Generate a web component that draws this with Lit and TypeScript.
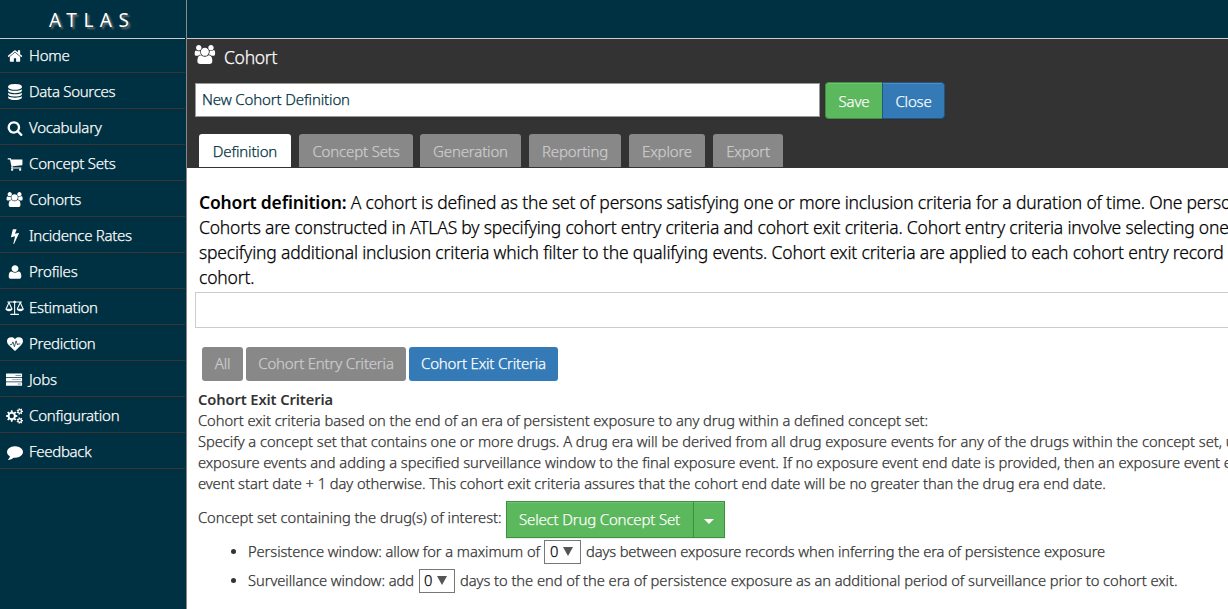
import { LitElement, html, css, svg } from "lit";

const gear = (cx: number, cy: number, r: number, inner: number, hole: number, teeth: number) => {
  const pts: string[] = [];
  const step = (Math.PI * 2) / teeth;
  for (let i = 0; i < teeth; i++) {
    const a = i * step;
    for (const [k, rad] of [[-0.3, inner], [-0.19, r], [0.19, r], [0.3, inner]]) {
      pts.push(`${(cx + Math.cos(a + k * step) * rad).toFixed(1)} ${(cy + Math.sin(a + k * step) * rad).toFixed(1)}`);
    }
  }
  return `M${pts.join("L")}ZM${cx - hole} ${cy}a${hole} ${hole} 0 1 0 ${hole * 2} 0a${hole} ${hole} 0 1 0 ${-hole * 2} 0Z`;
};

const USERS = svg`<path d="M657 896q-162 5-265 128h-134q-82 0-138-40.5t-56-118.5q0-353 124-353 6 0 43.5 21t97.5 42.5 119 21.5q67 0 133-23-5 37-5 66 0 159 93 293zm1071 637q0 120-73 189.5t-194 69.5h-874q-121 0-194-69.5t-73-189.5q0-53 3.500-103.500t14-109 26.500-108.500 43-97.500 62-81 85.500-53.500 111.500-20q10 0 43 21.500t73 48 107 48 135 21.500 135-21.500 107-48 73-48 43-21.500q61 0 111.500 20t85.500 53.500 62 81 43 97.500 26.500 108.500 14 109 3.500 103.500zm-1024-1277q0 106-75 181t-181 75-181-75-75-181 75-181 181-75 181 75 75 181zm704 384q0 159-112.500 271.500t-271.500 112.500-271.500-112.500-112.500-271.500 112.500-271.500 271.500-112.500 271.500 112.500 112.500 271.500zm576 225q0 78-56 118.500t-138 40.500h-134q-103-123-265-128 93-134 93-293 0-29-5-66 66 23 133 23 59 0 119-21.500t97.500-42.500 43.500-21q124 0 124 353zm-128-609q0 106-75 181t-181 75-181-75-75-181 75-181 181-75 181 75 75 181z"/>`;

const ICONS: Record<string, { w: number; body: unknown }> = {
  home: { w: 1792, body: svg`<path d="M1472 992v480q0 26-19 45t-45 19h-384v-384h-256v384h-384q-26 0-45-19t-19-45v-480q0-1 .5-3t.5-3l575-474 575 474q1 2 1 6zm223-69l-62 74q-8 9-21 11h-3q-13 0-21-7l-692-577-692 577q-12 8-24 7-13-2-21-11l-62-74q-8-10-7-23.500t11-21.500l719-599q32-26 76-26t76 26l244 204v-195q0-14 9-23t23-9h192q14 0 23 9t9 23v408l219 182q10 8 11 21.500t-7 23.500z"/>` },
  database: { w: 1792, body: svg`<path d="M896 768q237 0 443-43t325-127v170q0 69-103 128t-280 93.500-385 34.500-385-34.500-280-93.500-103-128v-170q119 84 325 127t443 43zm0 768q237 0 443-43t325-127v170q0 69-103 128t-280 93.500-385 34.500-385-34.500-280-93.500-103-128v-170q119 84 325 127t443 43zm0-384q237 0 443-43t325-127v170q0 69-103 128t-280 93.500-385 34.500-385-34.500-280-93.500-103-128v-170q119 84 325 127t443 43zm0-1152q208 0 385 34.500t280 93.500 103 128v128q0 69-103 128t-280 93.500-385 34.500-385-34.500-280-93.500-103-128v-128q0-69 103-128t280-93.500 385-34.500z"/>` },
  search: { w: 1792, body: svg`<path d="M1216 832q0-185-131.500-316.500t-316.500-131.500-316.500 131.500-131.500 316.500 131.500 316.500 316.500 131.500 316.500-131.500 131.500-316.500zm512 832q0 52-38 90t-90 38q-54 0-90-38l-343-342q-179 124-399 124-143 0-273.500-55.500t-225-150-150-225-55.500-273.500 55.500-273.500 150-225 225-150 273.500-55.500 273.500 55.500 225 150 150 225 55.500 273.500q0 220-124 399l343 343q37 37 37 90z"/>` },
  cart: { w: 1792, body: svg`<path d="M704 1536q0 52-38 90t-90 38-90-38-38-90 38-90 90-38 90 38 38 90zm896 0q0 52-38 90t-90 38-90-38-38-90 38-90 90-38 90 38 38 90zm128-1088v512q0 24-16.500 42.500t-40.500 21.500l-1044 122q13 60 13 70 0 16-24 64h920q26 0 45 19t19 45-19 45-45 19h-1024q-26 0-45-19t-19-45q0-11 8-31.500t16-36 21.500-40 15.500-29.500l-177-823h-204q-26 0-45-19t-19-45 19-45 45-19h256q16 0 28.500 6.500t19.500 15.500 13 24.500 8 26 5.500 29.500 4.500 26h1201q26 0 45 19t19 45z"/>` },
  users: { w: 2048, body: USERS },
  bolt: { w: 1792, body: svg`<path d="M1333 566q18 20 7 44l-540 1157q-13 25-42 25-4 0-14-2-17-5-25.500-19t-4.500-30l197-808-406 101q-4 1-12 1-18 0-31-11-18-15-13-39l201-825q4-14 16-23t28-9h328q19 0 32 12.500t13 29.500q0 8-5 18l-171 463 396-98q8-2 12-2 19 0 34 15z"/>` },
  user: { w: 1792, body: svg`<path d="M1600 1405q0 120-73 189.500t-194 69.500h-874q-121 0-194-69.500t-73-189.500q0-85 8.500-160.500t31.500-152 58.500-131 94-89 134.500-34.500q131 128 377 128t377-128q76 0 134.500 34.500t94 89 58.500 131 31.500 152 8.500 160.500zm-320-893q0 159-112.500 271.500t-271.500 112.500-271.500-112.500-112.500-271.500 112.500-271.500 271.500-112.500 271.500 112.500 112.500 271.500z"/>` },
  scale: { w: 2304, body: svg`<g fill="none" stroke="currentColor" stroke-width="125" stroke-linejoin="round" stroke-linecap="round"><path d="M330 250H1970M1150 140V1660M690 1720H1610M480 290L130 1080M480 290L830 1080M1820 290L1470 1080M1820 290L2170 1080"/></g><path d="M64 1060H896Q850 1350 480 1350T64 1060ZM1404 1060H2236Q2190 1350 1820 1350T1404 1060Z"/><circle cx="1150" cy="230" r="150"/>` },
  heartbeat: { w: 1792, body: svg`<path d="M896 1664q-26 0-44-18l-624-602q-10-8-27.500-26t-55.500-65.500-68-97.500-53.500-121-23.500-138q0-220 127-344t351-124q62 0 126.500 21.500t120 58 95.500 68.500 76 68q36-36 76-68t95.500-68.500 120-58 126.500-21.500q224 0 351 124t127 344q0 221-229 450l-623 600q-18 18-44 18z"/><path d="M330 960H520L670 660L830 1200L1020 540L1180 1000L1270 890H1470" fill="none" stroke="#003142" stroke-width="85"/>` },
  tasks: { w: 1920, body: svg`<path d="M60 190H1860q60 0 60 60V530q0 60-60 60H60q-60 0-60-60V250q0-60 60-60ZM60 690H1860q60 0 60 60V1070q0 60-60 60H60q-60 0-60-60V750q0-60 60-60ZM60 1230H1860q60 0 60 60V1570q0 60-60 60H60q-60 0-60-60V1290q0-60 60-60Z"/><path d="M1130 350H1790V430H1130ZM1400 1390H1790V1470H1400Z" fill="#003142"/><path d="M730 850H1790V960H730Z" fill="#9db0b8"/>` },
  cogs: { w: 1920, body: svg`<path fill-rule="evenodd" d="${gear(640, 896, 640, 470, 245, 8)}${gear(1540, 384, 370, 260, 125, 7)}${gear(1540, 1408, 370, 260, 125, 7)}"/>` },
  comment: { w: 1792, body: svg`<path d="M1792 896q0 174-120 321.500t-326 233-450 85.500q-70 0-145-8-198 175-460 231-49 14-114 22-17 2-30.500-9t-17.500-29v-1q-3-4-.5-12t2-10 4.500-9.500l6-9 7-8.500 8-9q7-8 31-34.500t34.500-38 31-39.500 32.500-51 27-59 26-76q-157-89-247.500-220t-90.500-281q0-174 120-321.500t326-233 450-85.500 450 85.500 326 233 120 321.500z"/>` },
};

class AtlasIcon extends LitElement {
  static properties = { name: {} };
  declare name: string;
  static styles = css`
    :host { display: inline-flex; }
    svg { display: block; height: var(--icon-size, 16px); width: auto; fill: currentColor; overflow: visible; }
  `;
  render() {
    const icon = ICONS[this.name];
    return html`<svg viewBox="0 0 ${icon.w} 1792">${icon.body}</svg>`;
  }
}
customElements.define("atlas-icon", AtlasIcon);

const NAV = [
  ["home", "Home", "n1"], ["database", "Data Sources", "n2"], ["search", "Vocabulary", "n1"],
  ["cart", "Concept Sets", "n1"], ["users", "Cohorts", "n2"], ["bolt", "Incidence Rates", "n2"],
  ["user", "Profiles", "n1"], ["scale", "Estimation", "n2"], ["heartbeat", "Prediction", "n1"],
  ["tasks", "Jobs", "n1"], ["cogs", "Configuration", "n1"], ["comment", "Feedback", "n2"],
];

class AppRoot extends LitElement {
  static styles = css`
    :host {
      display: grid; grid-template-columns: 187px minmax(0, 1fr); height: 609px; overflow: hidden;
      background: #fff; color: #333; font: 300 14.7px/21px "Noto Sans", "Open Sans", sans-serif; white-space: nowrap;
      -webkit-text-stroke: .25px currentColor;
    }
    * { box-sizing: border-box; }
    .side { background: #003142; color: #fff; border-right: 1px solid #888; padding-right: 1px; }
    .brand { height: 39px; border-bottom: 1px solid #ccc; padding: 7px 0 0 49px; font-size: 19px; line-height: 27px; font-weight: 400; -webkit-text-stroke: 0; letter-spacing: 6.5px; text-shadow: 2px 2px 2px #777; }
    .nav { height: 36px; display: flex; align-items: center; padding-top: 2px; border-bottom: 1px solid #3a3535; font-size: 15px; }
    .nav.home { height: 34px; padding-top: 0; }
    .nav atlas-icon { width: 29px; justify-content: center; }
    .nav.scale atlas-icon, .nav.tasks atlas-icon, .nav.users atlas-icon { --icon-size: 15px; }
    .n1 { letter-spacing: -.22px; } .n2 { letter-spacing: -.3px; }
    .top { height: 39px; background: #003142; border-bottom: 1px solid #ccc; }
    .head { height: 129px; background: #333; padding: 0 0 0 8px; display: flex; flex-direction: column; color: #fff; }
    .title { height: 44px; display: flex; padding-top: 5px; font-size: 17.5px; line-height: 26px; letter-spacing: -.3px; gap: 9px; }
    .title atlas-icon { --icon-size: 19px; height: 20px; padding-top: 1px; width: 21px; justify-content: center; margin-left: -1px; }
    .namebar { display: flex; height: 37px; margin-top: -1px; }
    .name { width: 625px; height: 34px; margin: 1px 5px 0 0; border: 1px solid #999; background: #fff; color: #003142; padding: 0 6px; font-size: 15px; line-height: 31px; letter-spacing: -.13px; }
    .btn { border: 1px solid; color: #fff; text-align: center; font-size: 15px; line-height: 37px; letter-spacing: -.17px; box-shadow: inset 0 1px 0 rgba(255,255,255,.15), 0 1px 1px rgba(0,0,0,.075); text-shadow: 0 -1px 0 rgba(0,0,0,.1); }
    .green { background: #5cb85c; border-color: #3e8f3e; }
    .save { width: 57px; border-right: 0; border-radius: 4px 0 0 4px; }
    .close { width: 63px; background: #337ab7; border-color: #245580; border-radius: 0 4px 4px 0; }
    .tabs { display: flex; height: 33px; margin: 15px 0 0 4px; }
    .tab { height: 33px; background: #888; color: #ccc; border-radius: 3px 3px 0 0; line-height: 35px; text-align: center; font-size: 15px; letter-spacing: -.16px; }
    .tab.on { background: #fff; color: #003142; }
    .w92 { width: 92px; margin-right: 8px; } .w114 { width: 114px; margin-right: 7px; } .w101 { width: 101px; margin-right: 8px; }
    .w76 { width: 76px; margin-right: 8px; } .w70 { width: 70px; }
    .intro { padding: 22px 0 0 12px; color: #000; font-size: 17.5px; line-height: 25px; overflow: hidden; }
    b { font-weight: 600; -webkit-text-stroke: 0; }
    .i0 { letter-spacing: -.19px; } .i1 { letter-spacing: -.187px; } .i2 { letter-spacing: -.195px; } .i3 { letter-spacing: -.178px; }
    .desc { height: 36px; border: 1px solid #ccc; border-right: 0; margin: 2px 0 0 8px; }
    .modes { display: flex; gap: 3px; padding: 19px 0 0 15px; }
    .mode { height: 34px; border-radius: 3px; background: #888; color: #ccc; font-size: 15px; line-height: 33px; text-align: center; letter-spacing: -.2px; }
    .m1 { width: 41px; } .m2 { width: 160px; } .m3 { width: 149px; background: #337ab7; color: #fff; }
    .body { padding: 8px 0 0 11px; overflow: hidden; }
    .e0 { letter-spacing: -.098px; } .e1 { letter-spacing: -.051px; } .e2 { letter-spacing: -.034px; } .e3 { letter-spacing: -.047px; }
    .pick { display: flex; height: 37px; margin-top: 7px; letter-spacing: -.04px; line-height: 33px; gap: 4px; }
    .drop { display: flex; }
    .sel { width: 187px; border-right: 0; line-height: 35px; }
    .arrow { width: 32px; display: flex; align-items: center; justify-content: center; padding-top: 3px; }
    .arrow::before { content: ""; border: 5px solid transparent; border-top-color: #fff; border-bottom: 0; }
    .list { display: flex; flex-direction: column; margin-top: -1px; }
    .item { display: flex; height: 29px; align-items: center; padding-left: 33px; }
    .item::before { content: ""; width: 5px; height: 5px; border-radius: 50%; background: #333; margin-right: 12px; }
    .num { display: flex; width: 37px; height: 24px; border: 1px solid #777; margin: 0 5px 0 4px; padding-left: 5px; align-items: center; color: #000; gap: 5px; }
    .item + .item .num { width: 36px; margin-left: 5px; padding-left: 4px; }
    .num::after { content: ""; border: 5px solid transparent; border-top: 9px solid #555; border-bottom: 0; }
    .b1 { letter-spacing: -.071px; } .b2 { letter-spacing: -.115px; } .b3 { letter-spacing: -.05px; } .b4 { letter-spacing: -.045px; }
  `;
  render() {
    return html`
      <aside class="side">
        <div class="brand">ATLAS</div>
        ${NAV.map(([icon, label, cls]) => html`<div class="nav ${icon}"><atlas-icon .name=${icon}></atlas-icon><span class=${cls}>${label}</span></div>`)}
      </aside>
      <main>
        <div class="top"></div>
        <div class="head">
          <div class="title"><atlas-icon .name=${"users"}></atlas-icon><span>Cohort</span></div>
          <div class="namebar"><div class="name">New Cohort Definition</div><div class="btn green save">Save</div><div class="btn close">Close</div></div>
          <div class="tabs">
            <div class="tab on w92">Definition</div><div class="tab w114">Concept Sets</div><div class="tab w101">Generation</div>
            <div class="tab w92">Reporting</div><div class="tab w76">Explore</div><div class="tab w70">Export</div>
          </div>
        </div>
        <div class="intro">
          <div class="i1"><b class="i0">Cohort definition:</b> A cohort is defined as the set of persons satisfying one or more inclusion criteria for a duration of time. One perso</div>
          <div class="i2">Cohorts are constructed in ATLAS by specifying cohort entry criteria and cohort exit criteria. Cohort entry criteria involve selecting one</div>
          <div class="i3">specifying additional inclusion criteria which filter to the qualifying events. Cohort exit criteria are applied to each cohort entry record</div>
          <div class="i3">cohort.</div>
        </div>
        <div class="desc"></div>
        <div class="modes"><div class="mode m1">All</div><div class="mode m2">Cohort Entry Criteria</div><div class="mode m3">Cohort Exit Criteria</div></div>
        <div class="body">
          <div class="e0"><b>Cohort Exit Criteria</b></div>
          <div class="e1">Cohort exit criteria based on the end of an era of persistent exposure to any drug within a defined concept set:</div>
          <div class="e2">Specify a concept set that contains one or more drugs. A drug era will be derived from all drug exposure events for any of the drugs within the concept set, u</div>
          <div class="e3">exposure events and adding a specified surveillance window to the final exposure event. If no exposure event end date is provided, then an exposure event e</div>
          <div class="e3">event start date + 1 day otherwise. This cohort exit criteria assures that the cohort end date will be no greater than the drug era end date.</div>
          <div class="pick"><span>Concept set containing the drug(s) of interest:</span><div class="drop"><div class="btn green sel">Select Drug Concept Set</div><div class="btn green arrow"></div></div></div>
          <div class="list">
            <div class="item"><span class="b1">Persistence window: allow for a maximum of</span><span class="num">0</span><span class="b2">days between exposure records when inferring the era of persistence exposure</span></div>
            <div class="item"><span class="b3">Surveillance window: add</span><span class="num">0</span><span class="b4">days to the end of the era of persistence exposure as an additional period of surveillance prior to cohort exit.</span></div>
          </div>
        </div>
      </main>`;
  }
}
customElements.define("app-root", AppRoot);
